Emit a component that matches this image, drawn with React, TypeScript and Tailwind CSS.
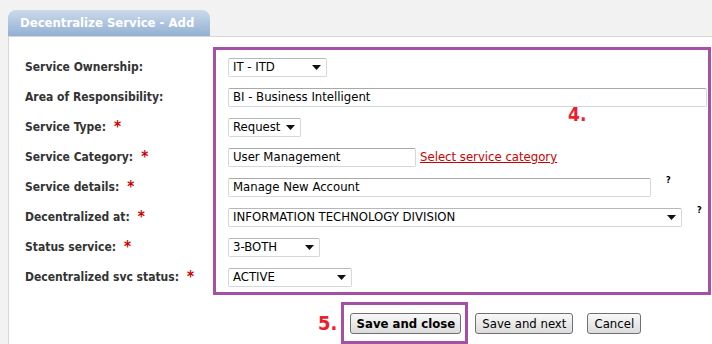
import React from "react";

const font = { fontFamily: '"DejaVu Sans Condensed", "DejaVu Sans", sans-serif' };

const Arrow = () => (
  <svg width="9" height="5" viewBox="0 0 9 5" className="shrink-0">
    <path d="M0 0 L9 0 L4.5 5 Z" fill="#111" />
  </svg>
);

const Select = ({ value, w }: { value: string; w: string }) => (
  <div
    className={`${w} h-[19px] flex items-center justify-between pl-[4px] pr-[5px] bg-white border border-[#d3d8de] border-t-[#b5b9be] rounded-[2px] text-[13px] text-black`}
  >
    <span className="whitespace-nowrap">{value}</span>
    <Arrow />
  </div>
);

const Input = ({ value, w }: { value: string; w: string }) => (
  <div
    className={`${w} h-[19px] flex items-center pl-[4px] bg-white border border-[#d3d8de] border-t-[#a9a9a9] rounded-[2px] text-[13px] text-black whitespace-nowrap`}
  >
    {value}
  </div>
);

const Help = () => (
  <span className="self-start mt-[4px] text-[9px] font-bold text-black leading-none">?</span>
);

const labels: [string, boolean][] = [
  ["Service Ownership:", false],
  ["Area of Responsibility:", false],
  ["Service Type:", true],
  ["Service Category:", true],
  ["Service details:", true],
  ["Decentralized at:", true],
  ["Status service:", true],
  ["Decentralized svc status:", true],
];

export default function App() {
  return (
    <div className="w-[712px] h-[344px] bg-[#f2f2f2] pt-[10px] pl-[8px] overflow-hidden" style={font}>
      {/* tab */}
      <div className="w-[202px] h-[26px] rounded-t-[8px] bg-gradient-to-b from-[#cbdaeb] to-[#93b0d2] pl-[12px] flex items-center text-white text-[13px] font-bold">
        Decentralize Service - Add
      </div>

      <div className="bg-white border-t border-l border-[#d6d6d6] h-[320px]">
        <div className="flex">
          {/* labels */}
          <div className="w-[204px] pl-[16px] pt-[15px] flex flex-col shrink-0">
            {labels.map(([t, req]) => (
              <div key={t} className="h-[30px] flex items-center text-[12px] font-bold text-[#333] whitespace-nowrap">
                {t}
                {req && <span className="ml-[8px] text-[#c00] text-[15px] leading-none">*</span>}
              </div>
            ))}
          </div>

          {/* fields */}
          <div className="relative mt-[10px] w-[498px] h-[248px] border-[3px] border-[#a54fa6] pt-[2px] pl-[12px] flex flex-col shrink-0">
            <div className="h-[30px] flex items-center">
              <Select value="IT - ITD" w="w-[99px]" />
            </div>
            <div className="h-[30px] flex items-center">
              <Input value="BI - Business Intelligent" w="w-[479px]" />
            </div>
            <div className="h-[30px] flex items-center">
              <Select value="Request" w="w-[73px]" />
            </div>
            <div className="h-[30px] flex items-center gap-[4px]">
              <Input value="User Management" w="w-[188px]" />
              <span className="text-[13px] text-[#c00] underline">Select service category</span>
            </div>
            <div className="h-[30px] flex items-center gap-[15px]">
              <Input value="Manage New Account" w="w-[423px]" />
              <Help />
            </div>
            <div className="h-[30px] flex items-center gap-[15px]">
              <Select value="INFORMATION TECHNOLOGY DIVISION" w="w-[454px]" />
              <Help />
            </div>
            <div className="h-[30px] flex items-center">
              <Select value="3-BOTH" w="w-[92px]" />
            </div>
            <div className="h-[30px] flex items-center">
              <Select value="ACTIVE" w="w-[124px]" />
            </div>

            <span className="absolute left-[352px] top-[55px] text-[19px] font-bold text-[#f01e2c] leading-none">
              4.
            </span>
          </div>
        </div>

        {/* buttons */}
        <div className="flex items-center ml-[309px] mt-[7px]">
          <span className="text-[20px] font-bold text-[#f01e2c] leading-none mr-[4px]">5.</span>
          <div className="border-[3px] border-[#a54fa6] pl-[6px] pr-[4px] pt-[6px] pb-[6px]">
            <button className="h-[21px] w-[111px] rounded-[3px] border border-[#707070] bg-gradient-to-b from-[#f8f8f8] to-[#dcdcdc] text-[13px] font-bold text-black">
              Save and close
            </button>
          </div>
          <button className="ml-[7px] h-[21px] w-[98px] rounded-[3px] border border-[#707070] bg-gradient-to-b from-[#f8f8f8] to-[#dcdcdc] text-[13px] text-black">
            Save and next
          </button>
          <button className="ml-[14px] h-[21px] w-[54px] rounded-[3px] border border-[#707070] bg-gradient-to-b from-[#f8f8f8] to-[#dcdcdc] text-[13px] text-black">
            Cancel
          </button>
        </div>
      </div>
    </div>
  );
}
